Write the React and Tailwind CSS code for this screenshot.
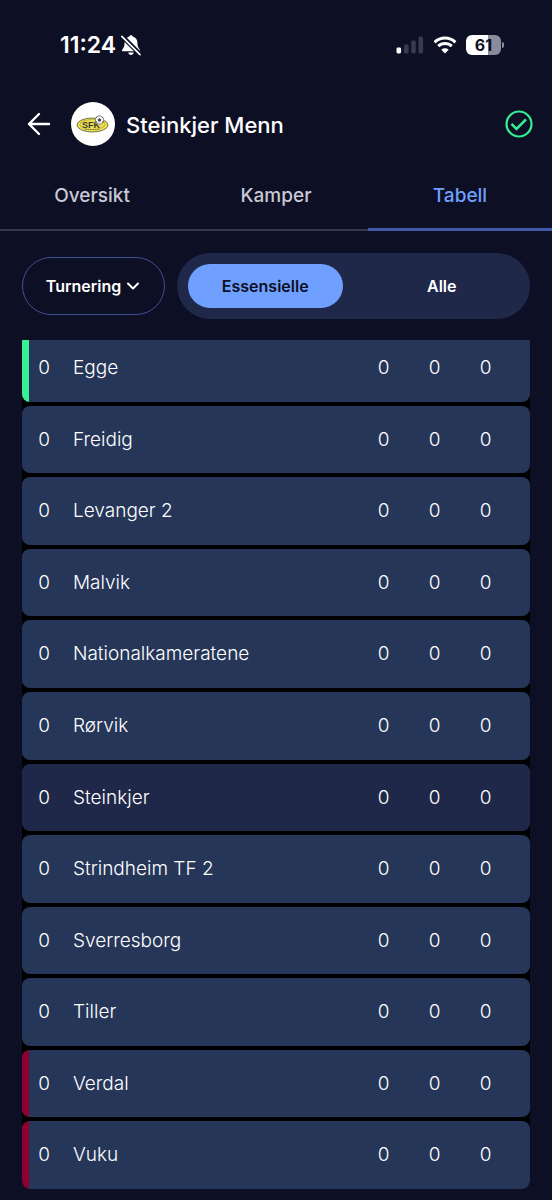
import { useState } from 'react'
import clsx from 'clsx'

const TABS = ['Oversikt', 'Kamper', 'Tabell']
const FILTERS = ['Essensielle', 'Alle']

const TEAMS = [
  { name: 'Egge', zone: 'up' },
  { name: 'Freidig' },
  { name: 'Levanger 2' },
  { name: 'Malvik' },
  { name: 'Nationalkameratene' },
  { name: 'Rørvik' },
  { name: 'Steinkjer', current: true },
  { name: 'Strindheim TF 2' },
  { name: 'Sverresborg' },
  { name: 'Tiller' },
  { name: 'Verdal', zone: 'down' },
  { name: 'Vuku', zone: 'down' },
]

function StatusBar() {
  return (
    <div className="flex h-[90px] items-center justify-between pl-[60px] pr-12">
      <div className="flex items-center gap-1">
        <span className="text-[23px] leading-7 font-semibold">11:24</span>
        <svg width="22" height="22" viewBox="0 0 22 22" fill="none" aria-hidden>
          <path
            d="M11 1.2c-.9 0-1.6.6-1.8 1.4C6.300 3.400 4.600 5.800 4.600 8.800c0 3.600-.9 5-2.300 6.600-.6.8-.3 1.800.8 1.800h15.800c1.100 0 1.400-1 .8-1.800-1.400-1.600-2.300-3-2.300-6.600 0-3-1.700-5.400-4.600-6.200C12.600 1.800 11.900 1.200 11 1.200ZM8.200 18.400c.3 1.500 1.400 2.500 2.800 2.500s2.500-1 2.800-2.500H8.200Z"
            fill="currentColor"
          />
          <path d="M2 2.200 20.200 20.400" stroke="#0d0f24" strokeWidth="4.600" />
          <path d="M1.800 2.400 20 20.600" stroke="currentColor" strokeWidth="1.700" strokeLinecap="round" />
        </svg>
      </div>

      <div className="flex items-center gap-[9px]">
        <svg width="28" height="18" viewBox="0 0 28 18" aria-hidden>
          <rect x="0.500" y="11.500" width="4.600" height="6" rx="1.400" fill="#fff" />
          <rect x="8" y="8.500" width="4.600" height="9" rx="1.400" fill="#383a4e" />
          <rect x="15.200" y="4.500" width="4.600" height="13" rx="1.400" fill="#383a4e" />
          <rect x="22.500" y="0.500" width="4.600" height="17" rx="1.400" fill="#383a4e" />
        </svg>
        <svg width="24" height="18" viewBox="0 0 24 18" fill="none" aria-hidden>
          <path d="M1.600 6.300a15 15 0 0 1 20.800 0" stroke="#fff" strokeWidth="3" />
          <path d="M5.200 10.200a9.800 9.800 0 0 1 13.600 0" stroke="#fff" strokeWidth="3" />
          <path d="M12 17.500 8.300 13.700a5.400 5.400 0 0 1 7.400 0Z" fill="#fff" />
        </svg>
        <div className="flex items-center gap-px">
          <div className="flex h-5 w-[35px] items-center justify-center rounded-md bg-linear-to-r from-white from-62% to-[#8b8c9b] to-62% text-base leading-5 font-bold text-[#0d0f24]">
            61
          </div>
          <div className="h-[6px] w-[2px] rounded-r-full bg-[#8b8c9b]" />
        </div>
      </div>
    </div>
  )
}

function ClubLogo() {
  return (
    <div className="ml-5 flex size-11 items-center justify-center rounded-full bg-white">
      <svg width="34" height="20" viewBox="0 0 34 20" aria-hidden>
        <ellipse cx="16.500" cy="11" rx="15.500" ry="7" fill="#ece04a" stroke="#77764f" strokeWidth="1" />
        <ellipse cx="16.500" cy="10.500" rx="12.500" ry="5" fill="none" stroke="#9c963f" strokeWidth="0.600" />
        <text x="6" y="13.500" fontFamily="Liberation Sans" fontWeight="700" fontSize="9" fill="#3b3b39">
          SFK
        </text>
        <path d="M9 15.500h14" stroke="#77764f" strokeWidth="1.200" strokeDasharray="1.500 1" />
        <circle cx="23.500" cy="6" r="4.200" fill="#f6f6f6" stroke="#67696f" strokeWidth="0.800" />
        <path d="m23.500 4.200 1.800 1.300-.7 2h-2.200l-.7-2Z" fill="#45474c" />
        <path d="m20.300 3.800.9-1.100M25.800 2.700l.9 1.100M20.800 8.500l-.8-1.200M26.300 8.500l.8-1.200" stroke="#45474c" />
      </svg>
    </div>
  )
}

function Header() {
  return (
    <header className="flex h-[68px] items-center pl-[27px] pr-[19px]">
      <button type="button" aria-label="Tilbake">
        <svg width="24" height="24" viewBox="0 0 24 24" fill="none" stroke="currentColor" strokeWidth="2.400" strokeLinecap="round" strokeLinejoin="round" aria-hidden>
          <path d="M22 12H2M12 2 2 12l10 10" />
        </svg>
      </button>
      <ClubLogo />
      <h1 className="ml-[11px] mt-[2px] grow text-[22px] leading-7 font-medium">Steinkjer Menn</h1>
      <button type="button" aria-label="Følger" className="text-[#34ee96]">
        <svg width="28" height="28" viewBox="0 0 28 28" fill="none" stroke="currentColor" strokeWidth="2.200" aria-hidden>
          <circle cx="14" cy="14" r="12.500" />
          <path d="m6.500 13.800 5 5L21 9.300" strokeWidth="2.600" />
        </svg>
      </button>
    </header>
  )
}

function Tabs({ active, onChange }) {
  return (
    <nav className="grid h-[73px] grid-cols-3">
      {TABS.map((tab) => (
        <button
          key={tab}
          type="button"
          onClick={() => onChange(tab)}
          className={clsx(
            'text-[19px] font-medium',
            tab === active
              ? 'border-b-3 border-[#3f59a8] pt-[6px] text-[#70a0ff]'
              : 'border-b-2 border-[#383a4c] pt-[5px] text-[#c8c9d4]'
          )}
        >
          {tab}
        </button>
      ))}
    </nav>
  )
}

function Filters({ active, onChange }) {
  return (
    <div className="mt-[22px] flex items-center gap-3 px-[22px]">
      <button
        type="button"
        className="flex h-[58px] w-[143px] shrink-0 items-center justify-center gap-[6px] rounded-full border border-[#3f4f96] pr-[6px] pl-1 text-base font-semibold"
      >
        Turnering
        <svg width="12" height="8" viewBox="0 0 12 8" fill="none" stroke="currentColor" strokeWidth="2" strokeLinecap="round" strokeLinejoin="round" aria-hidden>
          <path d="m1 1.500 5 5 5-5" />
        </svg>
      </button>
      <div className="grid h-[66px] grow grid-cols-2 gap-[22px] rounded-full bg-[#1f2849] p-[11px]">
        {FILTERS.map((filter) => (
          <button
            key={filter}
            type="button"
            onClick={() => onChange(filter)}
            className={clsx(
              'rounded-full text-base font-semibold',
              filter === active ? 'bg-[#70a0ff] text-[#0d0f24]' : 'text-white'
            )}
          >
            {filter}
          </button>
        ))}
      </div>
    </div>
  )
}

function Standings() {
  return (
    <section className="mx-[22px] mt-[21px] mb-[11px] flex grow flex-col overflow-hidden rounded-b-lg">
      {/* scrolled slightly, so the first row is cut at the top */}
      <table className="-mt-[6px] grid grow bg-black text-[19px] font-light">
        <tbody className="grid auto-rows-fr gap-1">
          {TEAMS.map((team) => (
            <tr
              key={team.name}
              className={clsx(
                'relative flex min-h-16 items-center overflow-hidden rounded-lg pt-px pr-[19px]',
                team.current ? 'bg-[#1f2849]' : 'bg-[#253659]',
                team.zone && 'before:absolute before:inset-y-0 before:left-0 before:w-[7px]',
                team.zone === 'up' && 'before:bg-[#35f192]',
                team.zone === 'down' && 'before:bg-[#8f0030]'
              )}
            >
              <td className="w-[51px] pr-[7px] text-center">0</td>
              <td className="grow">{team.name}</td>
              <td className="w-[51px] text-center">0</td>
              <td className="w-[51px] text-center">0</td>
              <td className="w-[51px] text-center">0</td>
            </tr>
          ))}
        </tbody>
      </table>
    </section>
  )
}

export default function App() {
  const [tab, setTab] = useState('Tabell')
  const [filter, setFilter] = useState('Essensielle')

  return (
    <main className="flex min-h-screen flex-col bg-[#0d0f24] font-['Inter',sans-serif] text-white">
      <StatusBar />
      <Header />
      <Tabs active={tab} onChange={setTab} />
      <Filters active={filter} onChange={setFilter} />
      <Standings />
    </main>
  )
}
